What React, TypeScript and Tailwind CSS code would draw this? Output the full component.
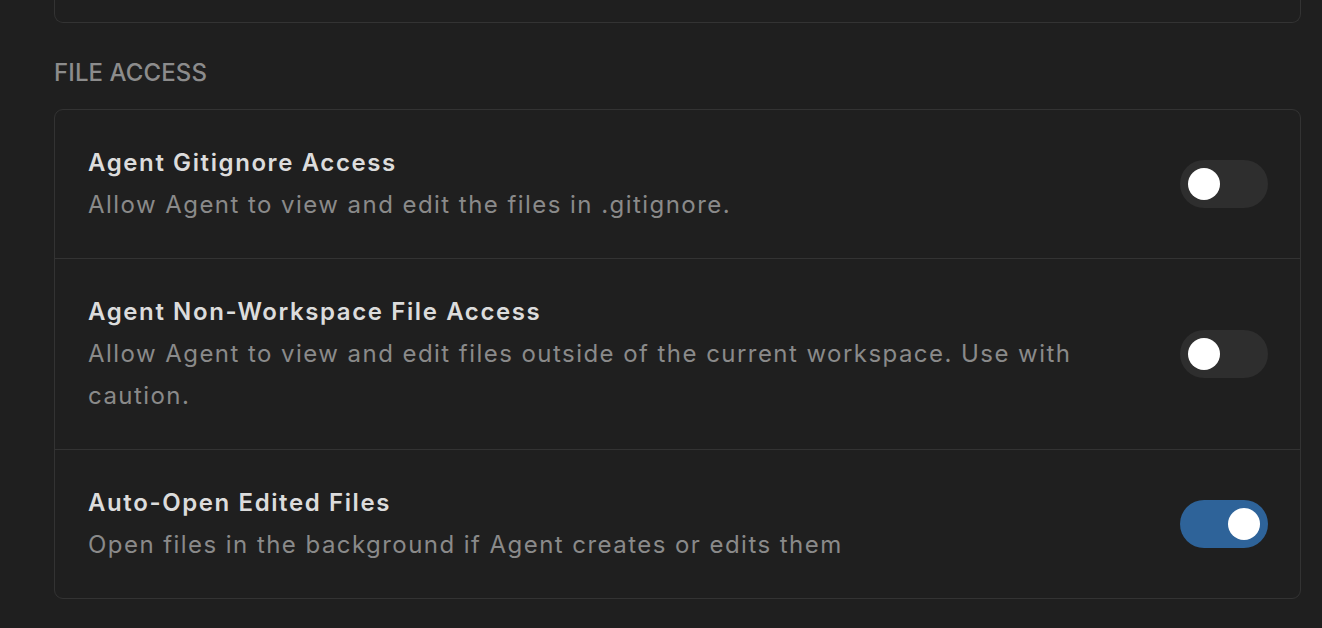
type Setting = {
  title: string;
  description: string;
  enabled: boolean;
};

const settings: Setting[] = [
  {
    title: "Agent Gitignore Access",
    description: "Allow Agent to view and edit the files in .gitignore.",
    enabled: false,
  },
  {
    title: "Agent Non-Workspace File Access",
    description:
      "Allow Agent to view and edit files outside of the current workspace. Use with caution.",
    enabled: false,
  },
  {
    title: "Auto-Open Edited Files",
    description: "Open files in the background if Agent creates or edits them",
    enabled: true,
  },
];

function Toggle({ on }: { on: boolean }) {
  return (
    <div
      className={
        on
          ? "flex h-[48px] w-[88px] shrink-0 items-center justify-end rounded-full bg-[#2e6399] px-[8px]"
          : "flex h-[48px] w-[88px] shrink-0 items-center justify-start rounded-full bg-[#2e2e2e] px-[8px]"
      }
    >
      <div className="h-[32px] w-[32px] rounded-full bg-white" />
    </div>
  );
}

export default function App() {
  return (
    <div
      className="min-h-[628px] bg-[#1f1f1f] pl-[54px] pr-[21px]"
      style={{ fontFamily: "Inter, 'Noto Sans', sans-serif" }}
    >
      {/* bottom edge of the previous section */}
      <div className="h-[23px] rounded-b-[9px] border border-t-0 border-[#333333]" />

      <div className="mt-[34px] text-[24px] leading-[32px] font-medium tracking-[0.1px] text-[#8c8c8c]">
        FILE ACCESS
      </div>

      <div className="mt-[20px] rounded-[9px] border border-[#333333]">
        {settings.map((s, i) => (
          <div
            key={s.title}
            className={
              i === 0
                ? "flex items-center gap-[56px] py-[32px] pl-[33px] pr-[32px]"
                : "flex items-center gap-[56px] border-t border-[#333333] py-[32px] pl-[33px] pr-[32px]"
            }
          >
            <div className="flex-1 text-[24px] leading-[42px]">
              <div className="font-semibold tracking-[1.6px] text-[#dcdcdc]">{s.title}</div>
              <div className="tracking-[1.45px] text-[#8a8a8a]">{s.description}</div>
            </div>
            <Toggle on={s.enabled} />
          </div>
        ))}
      </div>
    </div>
  );
}
